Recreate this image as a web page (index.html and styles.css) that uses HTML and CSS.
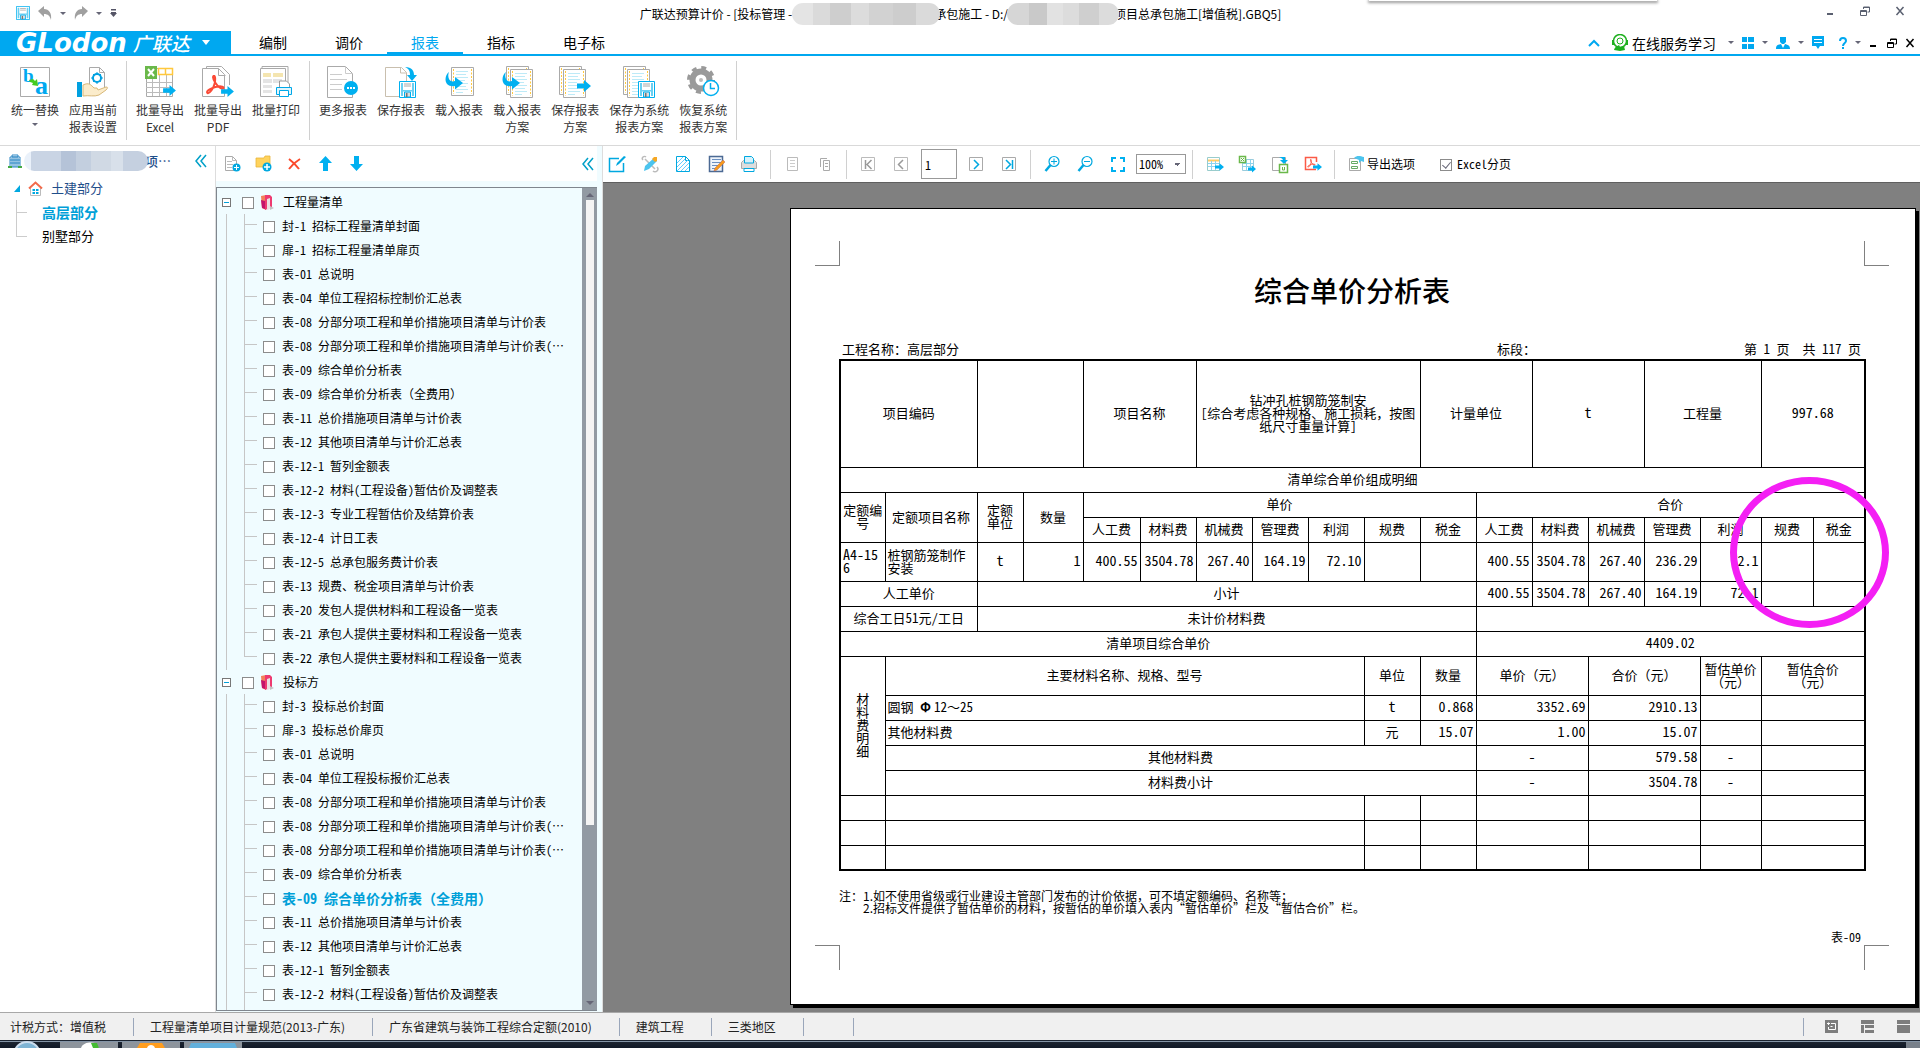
FILE: index.html
```html
<!DOCTYPE html>
<html lang="zh-CN">
<head>
<meta charset="utf-8">
<title>广联达预算计价</title>
<link rel="stylesheet" href="styles.css">
</head>
<body>
<svg class="defs" aria-hidden="true">
  <symbol id="arrow" viewBox="0 0 14 12"><path d="M0 3.500h7V0l7 6-7 6V8.500H0z" fill="#00b0f0"/></symbol>
  <symbol id="floppy" viewBox="0 0 17 17"><path d="M.5.5h16v16H.5z" fill="#fff" stroke="#00b0f0"/><path d="M2 2h2v13H2zM13 2h2v13h-2zM4 9h9v1.500H4z" fill="#6ad0f2"/><path d="M5 3h7M5 5h7" stroke="#aaa"/><path d="M5.500 11h6v5h-6z" fill="#ddd" stroke="#00b0f0"/><path d="M7 12h1.500v4H7z" fill="#777"/></symbol>
  <symbol id="sheet" viewBox="0 0 23 29"><path d="M.5.5h22v28H.5z" fill="#fff" stroke="#aaa"/><path d="M2.500 2v25M20.500 2v25" stroke="#ffc83d" stroke-dasharray="2 1.500"/><path d="M5 4.500h12M5 7.500h10M5 10.500h12M5 13.500h9M5 16.500h12M5 19.500h10M5 22.500h12M5 25.500h7" stroke="#bdeaf7"/></symbol>
  <symbol id="swoop" viewBox="0 0 18 18"><path d="M4 0C1 2-1 8 2 12c2 2 5 2.500 8 2v3.500L18 11l-8-6v4c-3 1-5 0-6-2-1-2-1-5 0-7z" fill="#00b0f0"/></symbol>
  <symbol id="acrobat" viewBox="0 0 20 20"><path d="M8 1c2-1 2 4 1 8-1 4-5 10-7 9-2-2 4-5 8-6 4-1 8-1 8 1s-5 0-8-5C8 5 7 2 8 1z" fill="none" stroke="#fb4a36" stroke-width="2"/></symbol>
  <symbol id="book" viewBox="0 0 13 17"><path d="M0 2l5-1v15l-4-2z" fill="#f3805a"/><path d="M0 6l4 1v8l-3-1z" fill="#c3136b"/><path d="M4 1h5l2 2v10l-7 3z" fill="#ee3a70"/><path d="M6 5l3-1v11l-3 1z" fill="#eadfe2"/><path d="M9 12l4 2-4 2z" fill="#c4c0c2"/></symbol>
  <symbol id="dbl" viewBox="0 0 12 14"><path d="M6 1L1 7l5 6M11 1L6 7l5 6" fill="none" stroke="#00a0c8" stroke-width="1.500"/></symbol>
  <symbol id="restore" viewBox="0 0 10 10"><path d="M3.500 3V1h6v5h-2M3 1.500h7M.5 4.500h6v5h-6zM0 5.500h7" fill="none" stroke="currentColor"/></symbol>
  <symbol id="close" viewBox="0 0 10 10"><path d="M1.500 1l7 8M8.500 1l-7 8" fill="none" stroke="currentColor" stroke-width="1.500"/></symbol>
</svg>

<header class="titlebar">
  <div class="quick">
    <button title="保存"><svg width="14" height="14" viewBox="0 0 17 17"><use href="#floppy"/></svg></button>
    <button title="撤销"><svg width="14" height="14" viewBox="0 0 14 14"><path d="M0 5l6-5v3c5 0 8 4 7 11-1-4-3-6-7-6v3z" fill="#a0a0a0"/></svg></button>
    <i class="caret"></i>
    <button title="恢复"><svg width="14" height="14" viewBox="0 0 14 14"><path d="M14 5L8 0v3C3 3 0 7 1 14c1-4 3-6 7-6v3z" fill="#a0a0a0"/></svg></button>
    <i class="caret"></i>
    <svg width="7" height="8" viewBox="0 0 7 8"><path d="M1 0h5v1.500H1zM1 3h5v1H1zM0 4h7L3.500 8z" fill="#556"/></svg>
  </div>
  <div class="title"><span>广联达预算计价 - [投标管理 -</span><i class="blur b1"></i><span>承包施工 - D:/</span><i class="blur b2"></i><span>项目总承包施工[增值税].GBQ5]</span></div>
  <div class="peek"></div>
  <div class="winbtns">
    <button title="最小化"><svg width="10" height="10"><path d="M2 8h6" stroke="currentColor" stroke-width="2"/></svg></button>
    <button title="还原"><svg width="10" height="10"><use href="#restore"/></svg></button>
    <button title="关闭"><svg width="10" height="10"><use href="#close"/></svg></button>
  </div>
</header>

<nav class="tabs">
  <button class="logo"><span class="word">GLodon</span><span class="cn">广联达</span><i class="caret"></i></button>
  <a href="#">编制</a><a href="#">调价</a><a href="#" class="on">报表</a><a href="#">指标</a><a href="#" class="wide">电子标</a>
  <div class="tools">
    <svg width="12" height="8" viewBox="0 0 12 8"><path d="M1 7l5-5 5 5" fill="none" stroke="#00a8f0" stroke-width="2"/></svg>
    <a href="#" class="svc"><svg width="16" height="17" viewBox="0 0 16 17"><circle cx="8" cy="7" r="6.500" fill="none" stroke="#1fb01f" stroke-width="1.500"/><circle cx="8" cy="7" r="3" fill="none" stroke="#1fb01f"/><path d="M0 6h2v5H0zM14 6h2v5h-2zM2 16c1-4 4-4 5-5l1 2 4-1 1 4-5 1z" fill="#1fb01f"/></svg>在线服务学习</a>
    <i class="caret"></i>
    <svg width="12" height="12"><path d="M0 0h5v5H0zM6 0h6v5H6zM0 7h5v5H0zM6 7h6v5H6z" fill="#00a8f0"/></svg>
    <i class="caret"></i>
    <svg width="14" height="13"><path d="M4 1h6v5l-2 2H6L4 6zM0 13c0-4 2-4 5-5l2 4 2-4c3 1 5 1 5 5z" fill="#00a8f0"/></svg>
    <i class="caret"></i>
    <svg width="12" height="13"><path d="M0 0h12v10H8l-2 3-2-3H0z" fill="#00a8f0"/><path d="M2 3.500h8M2 6.500h8" stroke="#fff"/></svg>
    <svg class="q" width="8" height="12"><path d="M1 4c0-4 6-4 6 0 0 2-3 2-3 5M4 10v2" fill="none" stroke="#00a8f0" stroke-width="2"/></svg>
    <i class="caret"></i>
    <svg class="w1" width="8" height="10"><path d="M1 8h6" stroke="#000" stroke-width="2"/></svg>
    <svg width="10" height="10"><use href="#restore"/></svg>
    <svg width="10" height="10"><use href="#close"/></svg>
  </div>
</nav>

<div class="ribbon">
  <button><svg viewBox="0 0 34 34"><path d="M2.500 2.500h29v29h-29z" fill="#fff" stroke="#aaa"/><text x="5" y="17" class="ltr">b</text><text x="17" y="29" class="ltr big">a</text><path d="M11 15l4-1 2 2 2-2 1 7-6-1 1-2-3-1z" fill="#4c2"/></svg>统一替换<i class="caret"></i></button>
  <button><svg viewBox="0 0 34 34"><path d="M13.500 24V2.500h10l5 5V25" fill="#fff" stroke="#aaa"/><path d="M23.500 2.500v5h5" fill="none" stroke="#aaa"/><circle cx="21" cy="13" r="4" fill="none" stroke="#00a0e0" stroke-width="2"/><path d="M21 7v12M15 13h12M17 9l8 8M25 9l-8 8" stroke="#00a0e0" stroke-dasharray="2 8"/><circle cx="21" cy="13" r="2.500" fill="#fff"/><path d="M1 17h5v15H1z" fill="#00a0e0"/><path d="M7 31V20c6-3 8 0 11 3h3l1 2 8-3c2 0 2 1 0 3l-7 5c-5 2-10 0-16 1z" fill="#fbeccb" stroke="#d8b878"/></svg>应用当前<br>报表设置</button>
  <hr>
  <button><svg viewBox="0 0 34 34"><path d="M3.500 3.500h26v28h-26z" fill="#fff" stroke="#aaa"/><path d="M9.500 12v19M16.500 3v28M23.500 3v28M3 17.500h26M3 22.500h26M3 27.500h26" stroke="#bbb"/><path d="M15.500 3.500h14v6h-14zM22.500 3v6" fill="#fff" stroke="#ffc83d" stroke-width="1.500"/><path d="M2 1h12v13H2z" fill="#6ab84a"/><path d="M5 4l6 7M11 4l-6 7" stroke="#fff" stroke-width="2"/><use href="#arrow" x="20" y="20" width="13" height="11"/></svg>批量导出<br>Excel</button>
  <button><svg viewBox="0 0 34 34"><path d="M5.500 5V1.500h15l8 8V20" fill="#fff" stroke="#aaa"/><path d="M1.500 3.500h16l6 6v22h-22z" fill="#fff" stroke="#aaa"/><path d="M17.500 3.500v7h7" fill="none" stroke="#aaa"/><use href="#acrobat" x="4" y="10" width="21" height="20"/><use href="#arrow" x="20" y="21" width="13" height="11"/></svg>批量导出<br>PDF</button>
  <button><svg viewBox="0 0 34 34"><path d="M3 3V1.500h26V30" fill="none" stroke="#aaa"/><path d="M1.500 3.500h25v28h-25z" fill="#fff" stroke="#aaa"/><path d="M4 8h8v4H4zM14 8h10v4H14z" fill="#f4e5b0"/><path d="M4 14h9v4H4zM14 14h9v4H14zM4 20h9v3H4zM4 25h9v3H4z" fill="#e4e4e4"/><path d="M20.500 22v-6h7l3 3v3" fill="#fff" stroke="#999"/><path d="M17.500 22.500h15v7h-15z" fill="#dff5fd" stroke="#00a8e8"/><path d="M20.500 25.500h9v6h-9z" fill="#fff" stroke="#00a8e8"/></svg>批量打印</button>
  <hr>
  <button><svg viewBox="0 0 34 34"><path d="M1.500 1.500h18l7 7v24h-25z" fill="#fff" stroke="#aaa"/><path d="M19.500 1.500v7h7M4 9.500h12M4 14.500h17M4 19.500h12M4 24.500h12" fill="none" stroke="#ccc"/><circle cx="25" cy="23" r="7" fill="#00b0f0"/><path d="M21 22h2v2h-2zM24 22h2v2h-2zM27 22h2v2h-2z" fill="#fff"/></svg>更多报表</button>
  <button><svg viewBox="0 0 34 34"><path d="M16 31.500H1.500v-29h16l5 5V17" fill="#fff" stroke="#c9bfae"/><path d="M16.500 3v5h6" fill="none" stroke="#c9bfae"/><path d="M21 2c7 0 9 4 9 8h3l-5 6-5-6h3c0-4-1-6-5-8z" fill="#00b0f0"/><use href="#floppy" x="15" y="16" width="17" height="17"/></svg>保存报表</button>
  <button><svg viewBox="0 0 34 34"><use href="#sheet" x="9" y="2" width="23" height="29"/><use href="#swoop" x="3" y="7" width="18" height="18"/></svg>载入报表</button>
  <button><svg viewBox="0 0 34 34"><use href="#sheet" x="6" y="1" width="23" height="29"/><use href="#sheet" x="10" y="4" width="23" height="29"/><use href="#swoop" x="2" y="7" width="18" height="18"/></svg>载入报表<br>方案</button>
  <button><svg viewBox="0 0 34 34"><use href="#sheet" x="1" y="1" width="23" height="29"/><use href="#sheet" x="5" y="4" width="23" height="29"/><use href="#arrow" x="19" y="15" width="14" height="12"/></svg>保存报表<br>方案</button>
  <button><svg viewBox="0 0 34 34"><use href="#sheet" x="1" y="1" width="23" height="29"/><use href="#sheet" x="5" y="4" width="23" height="29"/><use href="#floppy" x="16" y="16" width="17" height="17"/></svg>保存为系统<br>报表方案</button>
  <button><svg viewBox="0 0 34 34"><circle cx="15" cy="15" r="8.500" fill="none" stroke="#9a9a9a" stroke-width="6"/><circle cx="15" cy="15" r="12.500" fill="none" stroke="#9a9a9a" stroke-width="3" stroke-dasharray="5 4.800"/><circle cx="15" cy="15" r="2" fill="#bbb"/><circle cx="25" cy="23" r="7.500" fill="#fff" stroke="#00b0f0" stroke-width="1.500"/><path d="M24.500 18v5.500H29" fill="none" stroke="#00b0f0" stroke-width="1.500"/></svg>恢复系统<br>报表方案</button>
  <hr>
</div>

<main class="work">
  <aside class="project">
    <div class="phead">
      <svg width="14" height="15" viewBox="0 0 14 15"><path d="M2 3h10v10H2zM4 1h6v2H4z" fill="#fff" stroke="#2b86c4"/><path d="M4 4v9M6 4v9M8 4v9M10 4v9M2 6h10M2 9h10" stroke="#2b86c4"/><path d="M0 12h4v2H0zM10 12h4v2h-4z" fill="#4a4"/></svg>
      <i class="blur b3"></i><span>项…</span>
      <button title="收起"><svg width="12" height="14"><use href="#dbl"/></svg></button>
    </div>
    <ul class="ptree">
      <li class="root"><svg width="6" height="7"><path d="M6 0v7H0z" fill="#00a8e0"/></svg><svg width="15" height="15" viewBox="0 0 15 15"><path d="M2.500 7v7.500h10V7" fill="#fff" stroke="#bbb"/><path d="M1 7.500L7.500 1.500 14 7.500" fill="none" stroke="#f26a4b" stroke-width="2"/><path d="M4.500 8h2.500v2H4.500zM8 8h2.500v2H8zM4.500 11h2.500v2H4.500zM8 11h2.500v2H8z" fill="#00a8e0"/></svg><a href="#">土建部分</a></li>
      <li class="leaf on"><a href="#">高层部分</a></li>
      <li class="leaf"><a href="#">别墅部分</a></li>
    </ul>
  </aside>

  <section class="reports">
    <div class="rhead">
      <button title="新建报表"><svg width="17" height="17" viewBox="0 0 17 17"><path d="M1.500 1.500h7l4 4v10h-11z" fill="#fff" stroke="#aaa"/><path d="M8.500 1.500v4h4M3 6.500h5M3 9.500h6M3 12.500h5" fill="none" stroke="#bbb"/><circle cx="12.500" cy="12.500" r="4" fill="#00a8e0"/><path d="M10 12.500h5M12.500 10v5" stroke="#fff"/></svg></button>
      <button title="新建文件夹"><svg width="17" height="17" viewBox="0 0 17 17"><path d="M1 3h8l1-2h5v11H1z" fill="#ffd35c" stroke="#e8b53a" stroke-width=".8"/><circle cx="12" cy="12" r="4.500" fill="#00a8e0"/><path d="M9 12h6M12 9v6" stroke="#fff" stroke-width="1.500"/></svg></button>
      <button title="删除"><svg width="17" height="17" viewBox="0 0 17 17"><path d="M3 4c4 3 7 6 10 10M14 4C9 7 6 10 3 14" fill="none" stroke="#fb4a2c" stroke-width="2"/></svg></button>
      <button title="上移"><svg width="17" height="17" viewBox="0 0 17 17"><path d="M8.500 1L15 8h-4v8H6V8H2z" fill="#00b0f0"/></svg></button>
      <button title="下移"><svg width="17" height="17" viewBox="0 0 17 17"><path d="M8.500 16L15 9h-4V1H6v8H2z" fill="#00b0f0"/></svg></button>
      <button class="fold" title="收起"><svg width="12" height="14"><use href="#dbl"/></svg></button>
    </div>
    <div class="rbox">
      <div class="rtree">
        <div class="group">
          <div class="ghead"><i class="minus"></i><label><input type="checkbox"><svg width="13" height="17"><use href="#book"/></svg>工程量清单</label></div>
          <ul>
            <li><label><input type="checkbox"><span>封-1 招标工程量清单封面</span></label></li>
            <li><label><input type="checkbox"><span>扉-1 招标工程量清单扉页</span></label></li>
            <li><label><input type="checkbox"><span>表-01 总说明</span></label></li>
            <li><label><input type="checkbox"><span>表-04 单位工程招标控制价汇总表</span></label></li>
            <li><label><input type="checkbox"><span>表-08 分部分项工程和单价措施项目清单与计价表</span></label></li>
            <li><label><input type="checkbox"><span>表-08 分部分项工程和单价措施项目清单与计价表(<span class="fw">…</span></span></label></li>
            <li><label><input type="checkbox"><span>表-09 综合单价分析表</span></label></li>
            <li><label><input type="checkbox"><span>表-09 综合单价分析表<span class="fw">（全费用）</span></span></label></li>
            <li><label><input type="checkbox"><span>表-11 总价措施项目清单与计价表</span></label></li>
            <li><label><input type="checkbox"><span>表-12 其他项目清单与计价汇总表</span></label></li>
            <li><label><input type="checkbox"><span>表-12-1 暂列金额表</span></label></li>
            <li><label><input type="checkbox"><span>表-12-2 材料(工程设备)暂估价及调整表</span></label></li>
            <li><label><input type="checkbox"><span>表-12-3 专业工程暂估价及结算价表</span></label></li>
            <li><label><input type="checkbox"><span>表-12-4 计日工表</span></label></li>
            <li><label><input type="checkbox"><span>表-12-5 总承包服务费计价表</span></label></li>
            <li><label><input type="checkbox"><span>表-13 规费、税金项目清单与计价表</span></label></li>
            <li><label><input type="checkbox"><span>表-20 发包人提供材料和工程设备一览表</span></label></li>
            <li><label><input type="checkbox"><span>表-21 承包人提供主要材料和工程设备一览表</span></label></li>
            <li class="end"><label><input type="checkbox"><span>表-22 承包人提供主要材料和工程设备一览表</span></label></li>
          </ul>
        </div>
        <div class="group grow">
          <div class="ghead"><i class="minus"></i><label><input type="checkbox"><svg width="13" height="17"><use href="#book"/></svg>投标方</label></div>
          <ul>
            <li><label><input type="checkbox"><span>封-3 投标总价封面</span></label></li>
            <li><label><input type="checkbox"><span>扉-3 投标总价扉页</span></label></li>
            <li><label><input type="checkbox"><span>表-01 总说明</span></label></li>
            <li><label><input type="checkbox"><span>表-04 单位工程投标报价汇总表</span></label></li>
            <li><label><input type="checkbox"><span>表-08 分部分项工程和单价措施项目清单与计价表</span></label></li>
            <li><label><input type="checkbox"><span>表-08 分部分项工程和单价措施项目清单与计价表(<span class="fw">…</span></span></label></li>
            <li><label><input type="checkbox"><span>表-08 分部分项工程和单价措施项目清单与计价表(<span class="fw">…</span></span></label></li>
            <li><label><input type="checkbox"><span>表-09 综合单价分析表</span></label></li>
            <li class="on"><label><input type="checkbox"><span>表-09 综合单价分析表<span class="fw">（全费用）</span></span></label></li>
            <li><label><input type="checkbox"><span>表-11 总价措施项目清单与计价表</span></label></li>
            <li><label><input type="checkbox"><span>表-12 其他项目清单与计价汇总表</span></label></li>
            <li><label><input type="checkbox"><span>表-12-1 暂列金额表</span></label></li>
            <li><label><input type="checkbox"><span>表-12-2 材料(工程设备)暂估价及调整表</span></label></li>
          </ul>
        </div>
      </div>
      <div class="scroll"><i class="up"></i><i class="thumb"></i><i class="rest"></i><i class="down"></i></div>
    </div>
  </section>

  <section class="viewer">
    <div class="vbar">
      <button title="设计"><svg viewBox="0 0 20 20"><path d="M12 4.500H2.500v13h14V9" fill="none" stroke="#00a8e0" stroke-width="1.500"/><path d="M9 12l1-3 7-7 2 1-7 7z" fill="#00a8e0"/></svg></button>
      <button title="工具"><svg viewBox="0 0 20 20"><path d="M5 5l10 10M3 6a2 2 0 1 1 3-3M17 13a2 2 0 1 1-4 4" fill="none" stroke="#bbb" stroke-width="1.500"/><path d="M14 4l3 3-8 8-5 2 1-5z" fill="#4cc4ee"/><path d="M14 3h3v4l-2 1-3-3z" fill="#f6a723"/></svg></button>
      <button title="页面"><svg viewBox="0 0 20 20"><path d="M3.500 2.500h9l4 4v11h-13z" fill="#fff" stroke="#00a8e0"/><path d="M12.500 2.500v4h4" fill="none" stroke="#00a8e0"/><path d="M4 9l6-6M4 13l8-8M4 17L15 6M8 17l8-8M12 17l4-4" stroke="#6cf"/></svg></button>
      <button title="编辑"><svg viewBox="0 0 20 20"><path d="M3.500 2.500h13v15h-13z" fill="#eef4fb" stroke="#4c6a94" stroke-width="1.500"/><path d="M6 5.500h9M6 8.500h9M6 11.500h6M6 14.500h4" stroke="#6b8fc0"/><path d="M17 6l2 2-8 8-3 1 1-3z" fill="#f79a1c" stroke="#b65" stroke-width=".5"/></svg></button>
      <button title="打印"><svg viewBox="0 0 20 20"><path d="M2.500 8.500l2-2h11l2 2v6h-15z" fill="#ddd" stroke="#aaa"/><path d="M5.500 9V2.500h7l2 2V9z" fill="#d8f2fb" stroke="#00a8e0"/><path d="M5 14.500h10v3H5z" fill="#fff" stroke="#00a8e0"/></svg></button>
      <hr>
      <button title="单页"><svg viewBox="0 0 20 20"><path d="M5.500 3.500h10v13h-10z" fill="#fff" stroke="#bbb"/><path d="M8 6.500h5M8 9.500h5M8 12.500h5" stroke="#ccc"/></svg></button>
      <button title="多页"><svg viewBox="0 0 20 20"><path d="M5.500 13V4.500H12M8.500 6.500h6v10h-6zM10 9.500h3M10 12.500h3" fill="none" stroke="#aaa"/></svg></button>
      <hr>
      <button title="首页"><svg viewBox="0 0 20 20"><path d="M3.500 3.500h13v13h-13z" fill="none" stroke="#bbb"/><path d="M7.500 6v9M13.500 6L9 10.500l4.500 4.500" fill="none" stroke="#999" stroke-width="1.500"/></svg></button>
      <button title="上一页"><svg viewBox="0 0 20 20"><path d="M3.500 3.500h13v13h-13z" fill="none" stroke="#bbb"/><path d="M12 6l-4.500 4.500L12 15" fill="none" stroke="#999" stroke-width="1.500"/></svg></button>
      <input class="page" type="text" value="1" aria-label="页码">
      <button title="下一页"><svg viewBox="0 0 20 20"><path d="M3.500 3.500h13v13h-13z" fill="none" stroke="#aaa"/><path d="M8 6l4.500 4.500L8 15" fill="none" stroke="#00a8e0" stroke-width="1.500"/></svg></button>
      <button title="末页"><svg viewBox="0 0 20 20"><path d="M3.500 3.500h13v13h-13z" fill="none" stroke="#aaa"/><path d="M13.500 6v9M7 6l4.500 4.500L7 15" fill="none" stroke="#00a8e0" stroke-width="1.500"/></svg></button>
      <hr>
      <button title="放大"><svg viewBox="0 0 20 20"><circle cx="12" cy="7.500" r="5" fill="none" stroke="#00a8e0" stroke-width="1.200"/><path d="M9 7.500h6M12 4.500v6" stroke="#00a8e0"/><path d="M8.500 11L3.500 17" stroke="#00a8e0" stroke-width="2.500"/></svg></button>
      <button title="缩小"><svg viewBox="0 0 20 20"><circle cx="12" cy="7.500" r="5" fill="none" stroke="#00a8e0" stroke-width="1.200"/><path d="M9 7.500h6" stroke="#00a8e0"/><path d="M8.500 11L3.500 17" stroke="#00a8e0" stroke-width="2.500"/></svg></button>
      <button title="全屏"><svg viewBox="0 0 20 20"><path d="M4 8V4h4M12 4h4v4M16 13v4h-4M8 17H4v-4" fill="none" stroke="#00b0f0" stroke-width="2"/></svg></button>
      <select aria-label="缩放"><option>100%</option></select>
      <hr>
      <button title="导出"><svg viewBox="0 0 20 20"><path d="M3.500 3.500h12v13h-12z" fill="#fff" stroke="#9cc"/><path d="M4 6.500h11" stroke="#fc6" stroke-width="2"/><path d="M4 9.500h11M4 12.500h11M7.500 7v9M11.500 7v9" stroke="#8cd4ee"/><use href="#arrow" x="11" y="9" width="9" height="8"/></svg></button>
      <button title="导出 Excel"><svg viewBox="0 0 20 20"><path d="M5.500 5.500h11v11h-11z" fill="#fff" stroke="#9cd"/><path d="M6 9.500h10M6 12.500h10M9.500 6v10M13.500 6v10" stroke="#8cd4ee"/><path d="M2.500 2.500h6v6h-6z" fill="#fff" stroke="#6ab84a" stroke-width="1.500"/><path d="M4 4l3 3M7 4L4 7" stroke="#6ab84a"/><use href="#arrow" x="11" y="11" width="8" height="8"/></svg></button>
      <button title="导出到已有 Excel"><svg viewBox="0 0 20 20"><path d="M2.500 3.500h13v13h-13z" fill="#fff" stroke="#aaa"/><path d="M9 3h6v3h3l-4 4-4-4h3c-1-2-2-2-4-3z" fill="#00b0f0"/><path d="M9.500 10.500h8v8h-8z" fill="#fff" stroke="#6ab84a" stroke-width="1.500"/><path d="M12.500 13v3h2v-3" fill="none" stroke="#6ab84a"/></svg></button>
      <button title="导出 PDF"><svg viewBox="0 0 20 20"><path d="M13 15.500H2.500v-12h11V8" fill="#fff" stroke="#fb5a46" stroke-width="1.500"/><use href="#acrobat" x="4" y="5" width="9" height="9"/><use href="#arrow" x="10" y="9" width="9" height="8"/></svg></button>
      <hr>
      <button class="opt"><svg viewBox="0 0 20 20"><path d="M3.500 4.500h11v12h-11z" fill="#fff" stroke="#aaa"/><path d="M5.500 7.500h6v2h-6zM5.500 12.500h6v2h-6z" fill="#fff" stroke="#6a6"/><path d="M8 4c3-3 6-2 10-1v5l-3-1-2 2V6z" fill="#4cc4ee"/></svg>导出选项</button>
      <label class="chk"><input type="checkbox" checked>Excel分页</label>
    </div>
    <div class="canvas">
      <article class="paper">
        <div class="marks"><i class="tl"></i><i class="tr"></i></div>
        <h1>综合单价分析表</h1>
        <div class="meta"><span>工程名称<span class="fw">：</span>高层部分</span><span>标段<span class="fw">：</span></span><span class="pg">第 1 页&nbsp; 共 117 页</span></div>
        <div class="sheetwrap">
        <table>
          <colgroup><col class="c45"><col class="c92"><col class="c46"><col class="c60"><col class="c57"><col span="10" class="c56"><col class="c61"><col span="2" class="c52"></colgroup>
          <tr class="tall"><th colspan="2">项目编码</th><td colspan="2"></td><th colspan="2">项目名称</th><td colspan="4">钻冲孔桩钢筋笼制安<br>[综合考虑各种规格、施工损耗<span class="fw">，</span>按图<br>纸尺寸重量计算]</td><th colspan="2">计量单位</th><td colspan="2" class="num">t</td><th colspan="2">工程量</th><td colspan="2" class="num">997.68</td></tr>
          <tr><th colspan="18">清单综合单价组成明细</th></tr>
          <tr><th rowspan="2">定额编<br>号</th><th rowspan="2">定额项目名称</th><th rowspan="2">定额<br>单位</th><th rowspan="2">数量</th><th colspan="7">单价</th><th colspan="7">合价</th></tr>
          <tr><th>人工费</th><th>材料费</th><th>机械费</th><th>管理费</th><th>利润</th><th>规费</th><th>税金</th><th>人工费</th><th>材料费</th><th>机械费</th><th>管理费</th><th>利润</th><th>规费</th><th>税金</th></tr>
          <tr class="mid"><td class="num l">A4-15<br>6</td><td class="l">桩钢筋笼制作<br>安装</td><td class="num">t</td><td class="num r">1</td><td class="num r">400.55</td><td class="num r">3504.78</td><td class="num r">267.40</td><td class="num r">164.19</td><td class="num r">72.10</td><td></td><td></td><td class="num r">400.55</td><td class="num r">3504.78</td><td class="num r">267.40</td><td class="num r">236.29</td><td class="num r">72.1</td><td></td><td></td></tr>
          <tr><th colspan="2">人工单价</th><th colspan="9">小计</th><td class="num r">400.55</td><td class="num r">3504.78</td><td class="num r">267.40</td><td class="num r">164.19</td><td class="num r">72.1</td><td></td><td></td></tr>
          <tr><th colspan="2">综合工日51元/工日</th><th colspan="9">未计价材料费</th><td colspan="7"></td></tr>
          <tr><th colspan="11">清单项目综合单价</th><td colspan="7" class="num">4409.02</td></tr>
          <tr class="mid"><th rowspan="5">材<br>料<br>费<br>明<br>细</th><th colspan="8">主要材料名称、规格、型号</th><th>单位</th><th>数量</th><th colspan="2" class="fw">单价（元）</th><th colspan="2" class="fw">合价（元）</th><th class="fw">暂估单价<br>（元）</th><th colspan="2" class="fw">暂估合价<br>（元）</th></tr>
          <tr><td colspan="8" class="l">圆钢 <b class="fw"> Φ </b>12<span class="fw">～</span>25</td><td class="num">t</td><td class="num r">0.868</td><td colspan="2" class="num r">3352.69</td><td colspan="2" class="num r">2910.13</td><td></td><td colspan="2"></td></tr>
          <tr><td colspan="8" class="l">其他材料费</td><td>元</td><td class="num r">15.07</td><td colspan="2" class="num r">1.00</td><td colspan="2" class="num r">15.07</td><td></td><td colspan="2"></td></tr>
          <tr><th colspan="10">其他材料费</th><td colspan="2" class="num">-</td><td colspan="2" class="num r">579.58</td><td class="num">-</td><td colspan="2"></td></tr>
          <tr><th colspan="10">材料费小计</th><td colspan="2" class="num">-</td><td colspan="2" class="num r">3504.78</td><td class="num">-</td><td colspan="2"></td></tr>
          <tr><td></td><td colspan="8"></td><td></td><td></td><td colspan="2"></td><td colspan="2"></td><td></td><td colspan="2"></td></tr>
          <tr><td></td><td colspan="8"></td><td></td><td></td><td colspan="2"></td><td colspan="2"></td><td></td><td colspan="2"></td></tr>
          <tr><td></td><td colspan="8"></td><td></td><td></td><td colspan="2"></td><td colspan="2"></td><td></td><td colspan="2"></td></tr>
        </table>
        <div class="ring"></div>
        </div>
        <div class="notes fw"><span>注：</span><p>1.如不使用省级或行业建设主管部门发布的计价依据，可不填定额编码、名称等；<br>2.招标文件提供了暂估单价的材料，按暂估的单价填入表内“暂估单价”栏及“暂估合价”栏。</p></div>
        <div class="formno">表-09</div>
        <div class="marks"><i class="bl"></i><i class="br"></i></div>
      </article>
    </div>
  </section>
</main>

<footer class="status">
  <span>计税方式：增值税</span><span>工程量清单项目计量规范(2013-广东)</span><span>广东省建筑与装饰工程综合定额(2010)</span><span>建筑工程</span><span>三类地区</span><span class="none"></span>
  <div class="views">
    <svg width="13" height="13"><path d="M0 0h13v13H0z" fill="#7d7d7d"/><path d="M3.500 5V2.500M2 3.500h3M6 3.500h4.500v6h-7V7M5.500 6.500h2" fill="none" stroke="#fff"/></svg>
    <svg width="13" height="13"><path d="M0 0h13v4H0zM0 5h3v8H0zM4 5h9v3H4zM4 10h9v3H4z" fill="#7d7d7d"/></svg>
    <svg width="13" height="13"><path d="M0 0h13v4H0zM0 5h13v8H0z" fill="#7d7d7d"/></svg>
  </div>
</footer>
<div class="taskbar">
  <svg class="orb" width="28" height="7"><circle cx="14" cy="14" r="13" fill="#7fb4d4" stroke="#cde" stroke-width="2"/></svg>
  <i class="app"><svg width="24" height="6"><path d="M4 6c2-6 10-6 14-5l4 5z" fill="#fff"/><path d="M14 1h6l2 5h-6z" fill="#4b3"/></svg></i>
  <i class="app"><svg width="32" height="6"><path d="M2 6l3-5h22l3 5z" fill="#ff9d1e"/><path d="M12 6c1-4 7-4 8 0z" fill="#fff"/></svg></i>
  <i class="app"><svg width="48" height="6"><path d="M0 6l2-5h44l2 5z" fill="#62b0dc"/></svg></i>
  <i class="desk"></i>
</div>
</body>
</html>
```

FILE: styles.css
```css
* { box-sizing: border-box; }
body {
  margin: 0;
  min-height: 100vh;
  display: flex;
  flex-direction: column;
  overflow: hidden;
  background: #fff;
  color: #000;
  font: 12px/16px "Noto Sans CJK SC", sans-serif;
}
button { border: 0; padding: 0; background: none; font: inherit; color: inherit; }
a { color: inherit; text-decoration: none; }
ul { list-style: none; margin: 0; padding: 0; }
svg { display: block; flex: none; }
hr { border: 0; margin: 0; flex: none; width: 1px; background: #d0d0d0; }
.defs { position: absolute; width: 0; height: 0; }
/* full-width punctuation inside half-width text */
.fw { font-feature-settings: normal; }
.caret {
  flex: none;
  width: 5px;
  border: solid transparent;
  border-width: 3px 3px 0;
  border-top-color: #667;
}

/* title bar */
.titlebar { position: relative; display: flex; align-items: flex-start; justify-content: space-between; height: 31px; }
.quick { flex: 1; display: flex; align-items: center; gap: 8px; padding: 6px 0 0 16px; }
.title { display: flex; align-items: center; height: 28px; white-space: pre; }
.blur { flex: none; position: relative; border-radius: 12px; }
.b1 { width: 148px; height: 22px; margin-right: -6px; background: linear-gradient(90deg, #e4e4e4 14%, #dadada 14% 26%, #cecece 26% 40%, #dcdcdc 40% 52%, #d2d2d2 52% 68%, #cdcdcd 68% 84%, #dadada 84%); }
.b2 { width: 112px; height: 22px; margin: 0 -5px 0 -1px; background: linear-gradient(90deg, #d6d6d6 20%, #c9c9c9 20% 36%, #e2e2e2 36% 50%, #dcdcdc 50% 64%, #cfcfcf 64% 82%, #dcdcdc 82%); }
.b3 { width: 124px; height: 20px; margin-right: -3px; background: linear-gradient(90deg, #eaf1fa 6%, #c9d4e4 6% 30%, #b5c3d8 30% 42%, #c3cfdf 42% 54%, #d0d9e4 54% 70%, #d8e0ea 70% 80%, #c5d0e0 80%); }
.peek { position: absolute; right: 263px; top: 0; width: 288px; height: 1px; box-shadow: 0 1px 3px 1px #999; }
.winbtns { flex: 1; display: flex; justify-content: flex-end; gap: 25px; padding: 6px 15px 0 0; color: #5a6070; }

/* module tabs */
.tabs { display: flex; height: 25px; border-bottom: 2px solid #00a8f0; font-size: 14px; line-height: 22px; }
.logo { display: flex; align-items: center; width: 231px; margin-right: 4px; padding-left: 16px; background: #00a8f0; color: #fff; }
.logo .word { font: italic bold 26px/22px "DejaVu Sans", sans-serif; }
.logo .cn { margin-left: 6px; font-size: 19px; font-weight: 500; font-style: italic; }
.logo .caret { margin-left: 12px; width: 8px; border-width: 5px 4px 0; border-top-color: #fff; }
.tabs > a { width: 76px; text-align: center; }
.tabs > a.wide { width: 90px; }
.tabs > a.on { color: #00a8f0; border-bottom: 2px solid #00a8f0; }
.tools { flex: 1; display: flex; align-items: center; justify-content: flex-end; gap: 8px; padding-right: 5px; }
.tools .svc { display: flex; align-items: center; gap: 4px; margin: 0 4px; }
.tools .q { margin-left: 7px; }
.tools .w1 { margin-right: 2px; }

/* ribbon */
.ribbon { display: flex; padding: 5px 6px; height: 90px; border-bottom: 1px solid #d9d9d9; color: #333; }
.ribbon button { display: flex; flex-direction: column; align-items: center; justify-content: flex-start; min-width: 58px; padding: 4px 5px 0; line-height: 17px; text-align: center; }
.ribbon button svg { width: 34px; height: 34px; margin-bottom: 2px; }
.ribbon .caret { margin-top: 5px; width: 6px; }
.ribbon hr { margin: 0 4px; }
.ltr { font: bold 19px "Liberation Serif", serif; fill: #00a8f0; }
.ltr.big { font-size: 26px; }

/* work area */
.work { flex: 1; display: flex; min-height: 0; }
.project { width: 215px; flex: none; color: #1f4e8a; font-size: 13px; white-space: nowrap; }
.phead { display: flex; align-items: center; height: 30px; padding: 0 8px; font-weight: 500; }
.phead .b3 { margin-left: 2px; }
.phead button { margin-left: auto; }
.ptree li { display: flex; align-items: center; height: 24px; }
.ptree .root { gap: 8px; padding: 0 14px; }
.ptree .leaf {
  padding-left: 42px;
  color: #000;
  background: linear-gradient(#ccc, #ccc) 16px 0 / 1px 12px no-repeat, linear-gradient(#ccc, #ccc) 16px 12px / 11px 1px no-repeat;
}
.ptree .leaf.on { color: #00a0d8; font-size: 14px; font-weight: bold; background-size: 1px 24px, 11px 1px; }

.reports { width: 388px; flex: none; display: flex; flex-direction: column; padding-right: 5px; background: #f0fcff; border: solid #ddd; border-width: 0 1px; }
.rhead { display: flex; align-items: center; gap: 14px; height: 35px; padding: 0 3px 0 8px; background: #fff; }
.rhead .fold { margin-left: auto; }
.rbox { flex: 1; display: flex; min-height: 0; margin: 6px 0 1px; border: 1px solid #7f868e; border-right: 0; }
.rtree { flex: 1; min-width: 0; display: flex; flex-direction: column; padding-top: 2px; white-space: nowrap; font-feature-settings: "hwid"; overflow: hidden; }
.ghead, .group li, .group label { display: flex; align-items: center; }
.ghead { height: 24px; padding-left: 5px; }
.ghead label { gap: 7px; margin-left: 11px; }
.ghead label svg { margin-right: 2px; }
.minus { width: 9px; height: 9px; border: 1px solid #777; background: linear-gradient(#00a0d8, #00a0d8) center / 5px 1px no-repeat #fff; }
.group ul { background: linear-gradient(#c6c6c6, #c6c6c6) 9px 0 / 1px 100% no-repeat; }
.group li {
  height: 24px;
  padding-left: 46px;
  background: linear-gradient(#c6c6c6, #c6c6c6) 27px 0 / 1px 100% no-repeat, linear-gradient(#c6c6c6, #c6c6c6) 27px 10px / 13px 1px no-repeat;
}
.group li.end { background-size: 1px 10px, 13px 1px; }
.group li label { gap: 7px; }
.group li.on { color: #00a0d8; font-weight: bold; font-size: 14px; }
.group.grow { flex: 1; display: flex; flex-direction: column; }
.grow ul { flex: 1; background: linear-gradient(#c6c6c6, #c6c6c6) 9px 0 / 1px 100% no-repeat, linear-gradient(#c6c6c6, #c6c6c6) 27px 0 / 1px 100% no-repeat; }
input[type="checkbox"] { appearance: none; flex: none; width: 12px; height: 12px; margin: 1px 0 0; border: 1px solid #8c8c8c; background: #fff; }
.scroll { width: 15px; display: flex; flex-direction: column; align-items: center; padding: 5px 0; background: #929aa3; }
.up, .down { border: solid transparent; border-width: 0 4px 4px; border-bottom-color: #667; }
.down { border-width: 4px 4px 0; border-top-color: #667; }
.thumb { flex: 626; width: 8px; margin-top: 3px; background: #f4f4f4; }
.rest { flex: 176; }

/* report viewer */
.viewer { flex: 1; min-width: 0; display: flex; flex-direction: column; }
.vbar { display: flex; align-items: center; gap: 13px; height: 36px; padding-left: 4px; font-feature-settings: "hwid"; }
.vbar button { display: flex; align-items: center; flex: none; }
.vbar button svg { width: 20px; height: 20px; }
.vbar hr { height: 29px; margin: 0 -2px; }
.page { width: 36px; height: 30px; margin: 0 -4px 0 -3px; padding: 0 3px; border: 1px solid #999; font: inherit; }
.vbar select {
  appearance: none;
  width: 50px;
  height: 20px;
  margin: 0 -5px;
  padding: 0 2px;
  border: 1px solid #999;
  border-radius: 0;
  font: inherit;
  line-height: 18px;
  color: #000;
  background: linear-gradient(45deg, transparent 50%, #667 50%) 37px 8px / 3px 3px no-repeat, linear-gradient(315deg, transparent 50%, #667 50%) 40px 8px / 3px 3px no-repeat #fff;
}
.vbar .opt { gap: 1px; }
.chk { display: flex; align-items: center; gap: 5px; margin-left: 12px; }
.chk input { position: relative; }
.chk input:checked::after { content: ""; position: absolute; left: 3px; top: 0; width: 4px; height: 7px; border: solid #667; border-width: 0 1px 1px 0; transform: rotate(40deg); }
.canvas { flex: 1; padding: 25px 4px 3px 187px; background: #808080; border-top: 1px solid #5f5f5f; }
.paper {
  height: 797px;
  padding: 32px 26px 0 24px;
  border: 1px solid #000;
  background: #fff;
  box-shadow: 3px 3px #000;
  font-size: 13px;
  line-height: 13px;
  font-feature-settings: "hwid";
}
.marks { display: flex; justify-content: space-between; }
.marks i { width: 25px; height: 25px; border: solid #808080; }
.marks .tl { border-width: 0 1px 1px 0; }
.marks .tr { border-width: 0 0 1px 1px; }
.marks .bl { border-width: 1px 1px 0 0; }
.marks .br { border-width: 1px 0 0 1px; }
h1 { margin: 8px 0 0; font-size: 28px; line-height: 32px; font-weight: 500; text-align: center; }
.meta { display: flex; height: 16px; margin: 35px 28px 2px 27px; line-height: 16px; white-space: pre; }
.meta > span { flex: 243; }
.meta > span:first-child { flex: 655; }
.meta > .pg { flex: 121; text-align: right; }
.sheetwrap { position: relative; margin: 0 24px; }
table { width: 100%; table-layout: fixed; border-collapse: collapse; border: 2px solid #000; }
tr { height: 25px; }
.mid { height: 39px; }
.tall { height: 107px; }
th, td { padding: 0 0 2px; border: 1px solid #000; font-weight: 400; text-align: center; white-space: nowrap; }
.l { text-align: left; padding-left: 2px; }
.num { font-size: 14px; }
.r { text-align: right; padding-right: 2px; }
.c45 { width: 45px; }
.c46 { width: 46px; }
.c52 { width: 52px; }
.c56 { width: 56px; }
.c57 { width: 57px; }
.c60 { width: 60px; }
.c61 { width: 61px; }
.c92 { width: 92px; }
.ring { position: absolute; right: -24px; top: 118px; width: 159px; height: 151px; border: 7px solid #f41ff4; border-radius: 50%; }
.notes { display: flex; margin: 19px 24px 0; font-size: 12px; line-height: 12px; white-space: nowrap; }
.notes p { margin: 0; }
.formno { margin: 16px 28px 2px; font-size: 12px; line-height: 13px; text-align: right; }

/* status bar and taskbar */
.status { display: flex; align-items: center; height: 28px; border-top: 1px solid #a8a8a8; background: #f0f0f0; color: #222; }
.status span { height: 18px; padding: 1px 27px 0 16px; border-right: 1px solid #9aa6ba; }
.status span:first-child { padding-left: 10px; }
.status .none { width: 50px; padding: 0; }
.views { display: flex; align-items: center; gap: 23px; height: 18px; margin-left: auto; padding: 0 10px 0 21px; border-left: 1px solid #9aa6ba; }
.taskbar { display: flex; align-items: flex-end; gap: 4px; height: 8px; padding-left: 13px; border-top: 1px solid #1c2430; background: linear-gradient(#8494a6 1px, #1c2430 1px, #101826); }
.orb { margin-right: 15px; }
.app { width: 58px; height: 6px; display: flex; justify-content: center; background: #8d949c; }
.desk { width: 14px; height: 6px; margin-left: auto; background: #78808a; }
```
